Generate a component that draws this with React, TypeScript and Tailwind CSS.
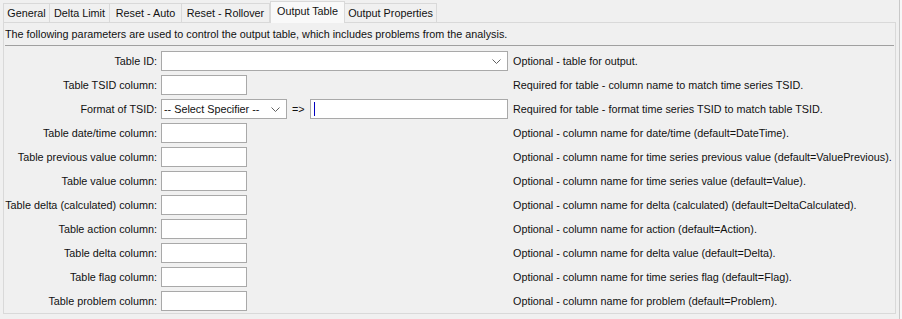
import { ReactNode } from 'react'

const tabs = [
  { label: 'General', w: 'w-[47px]' },
  { label: 'Delta Limit', w: 'w-[60px]' },
  { label: 'Reset - Auto', w: 'w-[72px]' },
  { label: 'Reset - Rollover', w: 'w-[88px]' },
  { label: 'Output Table', w: 'w-[75px]', selected: true },
  { label: 'Output Properties', w: 'w-[92px]' },
]

const columnRows = [
  ['Table date/time column:', 'Optional - column name for date/time (default=DateTime).'],
  ['Table previous value column:', 'Optional - column name for time series previous value (default=ValuePrevious).'],
  ['Table value column:', 'Optional - column name for time series value (default=Value).'],
  ['Table delta (calculated) column:', 'Optional - column name for delta (calculated) (default=DeltaCalculated).'],
  ['Table action column:', 'Optional - column name for action (default=Action).'],
  ['Table delta column:', 'Optional - column name for delta value (default=Delta).'],
  ['Table flag column:', 'Optional - column name for time series flag (default=Flag).'],
  ['Table problem column:', 'Optional - column name for problem (default=Problem).'],
]

function Chevron() {
  return (
    <svg width="9" height="5" viewBox="0 0 9 5" className="shrink-0">
      <polyline points="0.5,0.5 4.5,4.5 8.5,0.5" fill="none" stroke="#606060" strokeWidth="1" />
    </svg>
  )
}

function Row({ label, children, note }: { label: string; children: ReactNode; note: string }) {
  return (
    <div className="flex h-[24px] items-center">
      <div className="flex w-[153px] shrink-0 justify-end whitespace-nowrap">{label}</div>
      <div className="ml-[4px] flex w-[347px] shrink-0 items-center">{children}</div>
      <div className="ml-[5px] whitespace-nowrap">{note}</div>
    </div>
  )
}

function TextBox({ w = 'w-[86px]', caret = false }: { w?: string; caret?: boolean }) {
  return (
    <div className={`${w} h-[20px] shrink-0 border border-[#a9a9a9] bg-white flex items-center`}>
      {caret && <div className="ml-[3px] h-[14px] w-px bg-[#0000c0]" />}
    </div>
  )
}

export default function App() {
  return (
    <div
      className="flex h-[319px] w-[902px] overflow-hidden bg-[#f0f0f0] text-[10.8px] text-[#111]"
      style={{ fontFamily: '"Liberation Sans", Arial, sans-serif' }}
    >
      <div className="flex w-[897px] flex-col">
        {/* tab strip */}
        <div className="flex h-[22px] items-end pl-[3px]">
          {tabs.map((t) =>
            t.selected ? (
              <div
                key={t.label}
                className={`${t.w} relative z-10 -mb-px flex h-[22px] items-center justify-center border border-b-0 border-[#d9d9d9] bg-[#f9f9f9] pb-[2px] whitespace-nowrap`}
              >
                {t.label}
              </div>
            ) : (
              <div
                key={t.label}
                className={`${t.w} flex h-[19px] items-center justify-center border border-b-0 border-l-0 first:border-l border-[#d9d9d9] bg-[#f0f0f0] whitespace-nowrap`}
              >
                {t.label}
              </div>
            )
          )}
        </div>

        {/* panel */}
        <div className="ml-[3px] flex h-[292px] w-[893px] flex-col border border-[#d9d9d9]">
          <div className="flex h-[22px] items-center pl-[1px] whitespace-nowrap">
            The following parameters are used to control the output table, which includes problems from the analysis.
          </div>
          <div className="mx-[1px] h-px bg-[#a0a0a0]" />
          <div className="mt-[3px] flex flex-col">
            <Row label="Table ID:" note="Optional - table for output.">
              <div className="flex h-[20px] w-[347px] items-center justify-end border border-[#a9a9a9] bg-white pr-[6px]">
                <Chevron />
              </div>
            </Row>
            <Row label="Table TSID column:" note="Required for table - column name to match time series TSID.">
              <TextBox />
            </Row>
            <Row label="Format of TSID:" note="Required for table - format time series TSID to match table TSID.">
              <div className="flex h-[20px] w-[126px] shrink-0 items-center justify-between border border-[#a9a9a9] bg-white pl-[2px] pr-[6px] whitespace-nowrap">
                <span>-- Select Specifier --</span>
                <Chevron />
              </div>
              <span className="ml-[5px] w-[18px]">=&gt;</span>
              <TextBox w="w-[198px]" caret />
            </Row>
            {columnRows.map(([label, note]) => (
              <Row key={label} label={label} note={note}>
                <TextBox />
              </Row>
            ))}
          </div>
        </div>
      </div>
      {/* edge of neighbouring window */}
      <div className="ml-[2px] h-full w-px bg-[#c8c8c8]" />
      <div className="h-full flex-1 bg-[#f7f7f7]" />
    </div>
  )
}
